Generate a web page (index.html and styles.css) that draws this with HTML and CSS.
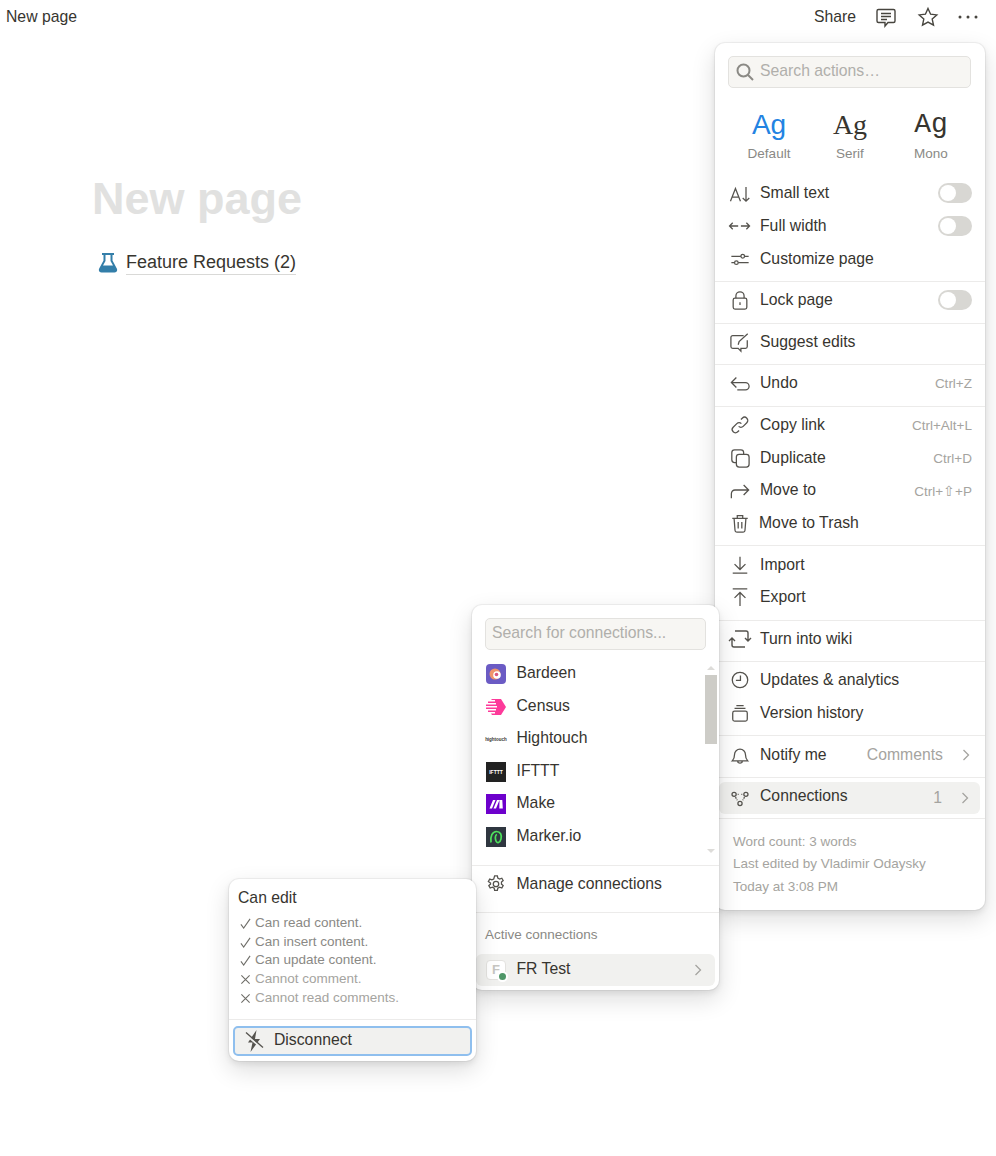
FILE: index.html
```html
<!DOCTYPE html>
<html lang="en">

<head>
    <meta charset="UTF-8">
    <meta name="viewport" content="width=device-width, initial-scale=1.0">
    <title>New page</title>
    <link rel="stylesheet" href="styles.css">
</head>
<body>
    <header class="topbar">
        <span class="crumb">New page</span>
        <div class="topbar-actions">
            <span class="share">Share</span>
            <svg class="top-icon" width="22" height="22" viewBox="0 0 22 22"><path d="M3.500 3.500h15a1.500 1.500 0 0 1 1.500 1.500v10a1.500 1.500 0 0 1-1.500 1.500h-5.500l-3 3.500v-3.500H3.500a1.500 1.500 0 0 1-1.500-1.500v-10a1.500 1.500 0 0 1 1.500-1.500z"/><path d="M6 7.500h10M6 10.500h10M6 13.500h6"/></svg>
            <svg class="top-icon" width="22" height="22" viewBox="0 0 22 22"><path d="M11 2.500l2.600 5.700 6.200.7-4.600 4.200 1.300 6.100-5.500-3.100-5.500 3.100 1.300-6.100-4.600-4.200 6.200-.7z"/></svg>
            <svg class="dots" width="20" height="4" viewBox="0 0 20 4"><circle cx="2" cy="2" r="1.500"/><circle cx="10" cy="2" r="1.500"/><circle cx="18" cy="2" r="1.500"/></svg>
        </div>
    </header>

    <main class="page">
        <h1 class="title">New page</h1>
        <div class="subpage">
            <svg width="20" height="22" viewBox="0 0 20 22"><path fill="#337ea9" d="M4 1h12v2h-1.500v5.500l4.300 8c1 2-.2 4-2.300 4H3.500c-2.100 0-3.300-2-2.300-4l4.300-8V3H4z"/><path fill="#fff" d="M7.500 3h5v6l2.500 4.500H5L7.500 9z"/></svg>
            <a class="subpage-link">Feature Requests (2)</a>
        </div>
    </main>

    <!-- main page menu -->
    <aside class="menu menu-page">
        <div class="menu-top">
            <div class="search search-icon">
                <svg width="20" height="20" viewBox="0 0 20 20"><circle cx="8.500" cy="8.500" r="6"/><path d="M13 13l5 5"/></svg>
                <span>Search actions…</span>
            </div>
            <div class="fonts">
                <div class="font-opt"><span class="ag ag-default">Ag</span><span>Default</span></div>
                <div class="font-opt"><span class="ag ag-serif">Ag</span><span>Serif</span></div>
                <div class="font-opt"><span class="ag ag-mono">Ag</span><span>Mono</span></div>
            </div>
        </div>

        <div class="section section-first">
            <div class="row"><svg class="ic" viewBox="0 0 22 22"><path d="M.5 20L6 6l5.500 14M2.500 15.500h7M17.600 4.500V20M14 16.500l3.600 3.500 3.600-3.500"/></svg><span class="label">Small text</span><i class="toggle"></i></div>
            <div class="row"><svg class="ic" viewBox="0 0 22 22"><path d="M-.5 11H9M3 7.500L-.5 11 3 14.500M12 11h9.500M18 7.500l3.500 3.500-3.500 3.500"/></svg><span class="label">Full width</span><i class="toggle"></i></div>
            <div class="row"><svg class="ic" viewBox="0 0 22 22"><path d="M1.500 8h10.500M16 8h4.500M1.500 15H5M9 15h11.500"/><circle cx="14" cy="8" r="2"/><circle cx="7" cy="15" r="2"/></svg><span class="label">Customize page</span></div>
        </div>
        <div class="section">
            <div class="row"><svg class="ic" viewBox="0 0 22 22"><rect x="3.500" y="9" width="15" height="12" rx="2"/><path d="M6.500 9V6.500a4.500 4.500 0 0 1 9 0V9M11 13.500v3"/></svg><span class="label">Lock page</span><i class="toggle"></i></div>
        </div>
        <div class="section">
            <div class="row"><svg class="ic" viewBox="0 0 22 22"><path d="M15 4H3a2 2 0 0 0-2 2v10a2 2 0 0 0 2 2h6l3 3v-3h5a2 2 0 0 0 2-2V9M9 14l1-3.500L19.500 2"/></svg><span class="label">Suggest edits</span></div>
        </div>
        <div class="section">
            <div class="row"><svg class="ic" viewBox="0 0 22 22"><path d="M7 5L1.500 10.500 7 16M1.500 10.500H17a4 4 0 0 1 0 8H8"/></svg><span class="label">Undo</span><span class="hint">Ctrl+Z</span></div>
        </div>
        <div class="section">
            <div class="row"><svg class="ic" viewBox="0 0 22 22"><path d="M9.500 12.500a3.500 3.500 0 0 0 5 0l4-4a3.500 3.500 0 0 0-5-5l-1.500 1.500M12.500 9.500a3.500 3.500 0 0 0-5 0l-4 4a3.500 3.500 0 0 0 5 5l1.500-1.500"/></svg><span class="label">Copy link</span><span class="hint">Ctrl+Alt+L</span></div>
            <div class="row"><svg class="ic" viewBox="0 0 22 22"><rect x="7" y="7" width="14" height="14" rx="3"/><path d="M7 16H5a3 3 0 0 1-3-3V5a3 3 0 0 1 3-3h7a3 3 0 0 1 3 3v2"/></svg><span class="label">Duplicate</span><span class="hint">Ctrl+D</span></div>
            <div class="row"><svg class="ic" viewBox="0 0 22 22"><path d="M1.500 20v-5a4 4 0 0 1 4-4h15M15 5.500l5.500 5.500-5.500 5.500"/></svg><span class="label">Move to</span><span class="hint">Ctrl+⇧+P</span></div>
            <div class="row"><svg class="ic" viewBox="0 0 22 22"><path d="M2.500 6h17M8 6V3h6v3M4.500 6l1 13a2 2 0 0 0 2 2h7a2 2 0 0 0 2-2l1-13M9 10v7M13 10v7"/></svg><span class="label label-trash">Move to Trash</span></div>
        </div>
        <div class="section">
            <div class="row"><svg class="ic" viewBox="0 0 22 22"><path d="M11 2v14M5 10l6 6 6-6M3 20h16"/></svg><span class="label">Import</span></div>
            <div class="row"><svg class="ic" viewBox="0 0 22 22"><path d="M11 21V6M5 12l6-6 6 6M3 2h16"/></svg><span class="label">Export</span></div>
        </div>
        <div class="section">
            <div class="row"><svg class="ic ic-wide" viewBox="0 0 22 22"><path d="M0 13l3-3 3 3M3 10v7a2 2 0 0 0 2 2h11M22 10l-3 3-3-3M19 13V5a2 2 0 0 0-2-2H6"/></svg><span class="label">Turn into wiki</span></div>
        </div>
        <div class="section">
            <div class="row"><svg class="ic" viewBox="0 0 22 22"><circle cx="11" cy="11" r="8.500"/><path d="M11.500 6v5.500H6.500"/></svg><span class="label">Updates &amp; analytics</span></div>
            <div class="row"><svg class="ic" viewBox="0 0 22 22"><rect x="3" y="9" width="16" height="11" rx="2"/><path d="M5 6h12M7 3h8"/></svg><span class="label">Version history</span></div>
        </div>
        <div class="section">
            <div class="row"><svg class="ic" viewBox="0 0 22 22"><path d="M2.500 17.500c1.500-1.500 2.500-3 2.500-7a6 6 0 0 1 12 0c0 4 1 5.500 2.500 7zM8.500 17.500a2.500 2.500 0 0 0 5 0"/></svg><span class="label">Notify me</span><span class="value">Comments</span><svg class="chev" viewBox="0 0 8 12"><path d="M1.500 1l5 5-5 5"/></svg></div>
        </div>
        <div class="section section-active">
            <div class="row row-hover"><svg class="ic" viewBox="0 0 22 22"><circle cx="4.500" cy="7" r="2.300"/><circle cx="17.500" cy="7" r="2.300"/><circle cx="11" cy="17" r="2.300"/><path d="M8.500 7h1M12.500 7h1M6 10l2 3.500M16 10l-2 3.500" stroke-dasharray="2 1"/></svg><span class="label">Connections</span><span class="value value-count">1</span><svg class="chev" viewBox="0 0 8 12"><path d="M1.500 1l5 5-5 5"/></svg></div>
        </div>
        <div class="section menu-foot">
            <p>Word count: 3 words</p>
            <p>Last edited by Vladimir Odaysky</p>
            <p>Today at 3:08 PM</p>
        </div>
    </aside>

    <!-- connections menu -->
    <aside class="menu menu-conn">
        <div class="search search-conn"><span>Search for connections...</span></div>
        <div class="conn-list">
            <div class="conn-rows">
                <div class="row conn-row">
                    <svg class="logo" viewBox="0 0 20 20"><rect width="20" height="20" rx="4" fill="#6b5bc4"/><circle cx="9" cy="10" r="5.500" fill="#f0956b"/><circle cx="11" cy="11" r="3.800" fill="#fff"/><circle cx="10.500" cy="10.500" r="1.800" fill="#d9577f"/></svg>
                    <span class="label">Bardeen</span>
                </div>
                <div class="row conn-row">
                    <svg class="logo" viewBox="0 0 20 20"><path fill="#fd3a9a" d="M6 2h9l5 8-5 8H6l-1-1.500h4V15H2v-1.500h8V12H0v-1.500h11V9H0V7.500h10V6H2V4.500h7V3H5z"/></svg>
                    <span class="label">Census</span>
                </div>
                <div class="row conn-row">
                    <span class="logo logo-ht">hightouch</span>
                    <span class="label">Hightouch</span>
                </div>
                <div class="row conn-row">
                    <span class="logo logo-ifttt">IFTTT</span>
                    <span class="label">IFTTT</span>
                </div>
                <div class="row conn-row">
                    <svg class="logo" viewBox="0 0 20 20"><rect width="20" height="20" fill="#6d00cc"/><path fill="#fff" d="M3.500 14.500L7 6h2.500L6 14.500zM7.500 14.500L11 6h2.500L10 14.500zM13.500 6h2.800l.5 8.500h-3.500z"/></svg>
                    <span class="label">Make</span>
                </div>
                <div class="row conn-row">
                    <svg class="logo" viewBox="0 0 20 20"><rect width="20" height="20" fill="#2f3640"/><path fill="none" stroke="#4ee05c" stroke-width="1.700" d="M5 15.500C4 9 6.500 4.500 10.500 4.500S16 8 15 12s-4 4.500-5 2-1-6 1-6.500"/></svg>
                    <span class="label">Marker.io</span>
                </div>
            </div>
            <div class="scroll">
                <i class="arrow-up"></i>
                <i class="thumb"></i>
                <i class="arrow-down"></i>
            </div>
        </div>
        <div class="section conn-manage">
            <div class="row conn-row">
                <svg class="ic" viewBox="0 0 22 22"><circle cx="11" cy="11" r="3"/><path d="M9.500 2h3l.5 2.500 2 1 2.400-.9 1.500 2.600-1.900 1.700v2.200l1.900 1.700-1.500 2.600-2.400-.9-2 1-.5 2.500h-3l-.5-2.500-2-1-2.400.9-1.500-2.600 1.900-1.700V9.900L2.600 8.200l1.500-2.600 2.400.9 2-1z"/></svg>
                <span class="label">Manage connections</span>
            </div>
        </div>
        <div class="section conn-active">
            <p class="conn-head">Active connections</p>
            <div class="row row-hover conn-item">
                <span class="avatar">F<i class="dot"></i></span>
                <span class="label">FR Test</span>
                <svg class="chev" viewBox="0 0 8 12"><path d="M1.500 1l5 5-5 5"/></svg>
            </div>
        </div>
    </aside>

    <!-- permissions popup -->
    <aside class="menu menu-perm">
        <div class="perm-body">
            <p class="perm-title">Can edit</p>
            <ul class="perm-list">
                <li><svg viewBox="0 0 12 12"><path d="M1 7l3 4 7-10"/></svg>Can read content.</li>
                <li><svg viewBox="0 0 12 12"><path d="M1 7l3 4 7-10"/></svg>Can insert content.</li>
                <li><svg viewBox="0 0 12 12"><path d="M1 7l3 4 7-10"/></svg>Can update content.</li>
                <li class="off"><svg viewBox="0 0 12 12"><path d="M1.500 1.500l9 9M10.500 1.500l-9 9"/></svg>Cannot comment.</li>
                <li class="off"><svg viewBox="0 0 12 12"><path d="M1.500 1.500l9 9M10.500 1.500l-9 9"/></svg>Cannot read comments.</li>
            </ul>
        </div>
        <div class="perm-foot">
            <button class="disconnect">
                <svg width="20" height="24" viewBox="0 0 20 24"><path fill="#55534e" d="M12.500 1L4 13.500h4.500L6.500 23 16 10h-5z"/><path class="slash-gap" d="M1 5l18 15"/><path class="slash" d="M2 3.500l17 15"/></svg>
                <span class="disconnect-text">Disconnect</span>
            </button>
        </div>
    </aside>
</body>

</html>
```

FILE: styles.css
```css
* {
    box-sizing: border-box;
}

body {
    font-family: "Liberation Sans", Arial, sans-serif;
    color: #37352f;
    background-color: #fff;
    margin: 0;
    padding: 0;
    height: 1156px;
    position: relative;
    overflow: hidden;
}

p {
    margin: 0;
}

.topbar {
    display: flex;
    align-items: center;
    justify-content: space-between;
    height: 32px;
    padding: 2px 18px 0 6px;
    font-size: 15.750px;
}

.topbar-actions {
    display: flex;
    align-items: center;
}

.share {
    margin-right: 19px;
}

.top-icon {
    fill: none;
    stroke: #47453f;
    stroke-width: 1.400;
    margin-right: 20px;
}

.top-icon + .top-icon {
    margin-right: 19px;
}

.dots {
    fill: #47453f;
}

.page {
    padding: 140px 0 0 92px;
}

.title {
    margin: 0;
    font-size: 45px;
    line-height: 54px;
    font-weight: 700;
    color: #e1e1e0;
}

.subpage {
    display: flex;
    align-items: center;
    gap: 8px;
    margin-top: 25px;
    margin-left: 6px;
    font-size: 18px;
}

.subpage-link {
    border-bottom: 1px solid #d9d9d7;
    line-height: 23px;
}

.menu {
    position: absolute;
    background-color: #fff;
    border-radius: 10px;
    box-shadow: 0 0 0 1px rgba(15, 15, 15, 0.05), 0 3px 6px rgba(15, 15, 15, 0.08), 0 9px 24px rgba(15, 15, 15, 0.14);
}

.menu-page {
    left: 715px;
    top: 43px;
    width: 270px;
    height: 867px;
}

.menu-conn {
    left: 472px;
    top: 605px;
    width: 247px;
    height: 385px;
}

.menu-perm {
    left: 229px;
    top: 879px;
    width: 247px;
    height: 182px;
}

.menu-top {
    padding: 13px 14px 0 13px;
}

.search {
    display: flex;
    align-items: center;
    height: 32px;
    padding-bottom: 3px;
    background-color: #f7f6f3;
    border: 1px solid #e3e2df;
    border-radius: 5px;
    font-size: 15.750px;
    color: #b0afab;
}

.search-icon {
    padding-left: 6px;
    gap: 5px;
}

.search-icon svg {
    margin-top: 3px;
    fill: none;
    stroke: #8b8a85;
    stroke-width: 2;
}

.fonts {
    display: grid;
    grid-template-columns: repeat(3, 81px);
    margin: 19px 0 0 .5px;
    font-size: 13.500px;
    color: #8a8985;
    height: 70px;
}

.font-opt {
    display: flex;
    flex-direction: column;
    align-items: center;
    gap: 3px;
}

.ag {
    font-size: 28px;
    line-height: 36px;
    color: #37352f;
}

.ag-default {
    color: #2383e2;
}

.ag-serif {
    font-family: "Liberation Serif", serif;
}

.ag-mono {
    font-family: "Liberation Mono", monospace;
}

.section {
    padding: 2px 0 5.750px;
    border-top: 1px solid #ecebea;
}

.section-first {
    border-top: 0;
    padding-top: 0;
}

.row {
    display: flex;
    align-items: center;
    height: 32.750px;
    padding: 0 13px 0 14.500px;
    font-size: 15.750px;
}

.ic {
    flex: none;
    width: 20px;
    height: 20px;
    margin-right: 10.500px;
    overflow: visible;
    fill: none;
    stroke: #55534e;
    stroke-width: 1.400;
}

.ic-wide {
    width: 22px;
    height: 22px;
    margin: 0 9.500px 0 -1px;
}

.label {
    flex: 1;
}

.label-trash {
    margin-left: -1px;
}

.hint {
    margin-top: 1px;
    font-size: 13.500px;
    color: #a5a4a0;
}

.value {
    color: #a5a4a0;
    margin-right: 19px;
}

.value-count {
    flex: none;
    margin-right: 19px;
}

.chev {
    flex: none;
    width: 8px;
    height: 12px;
    margin-right: 2px;
    fill: none;
    stroke: #a5a4a0;
    stroke-width: 1.300;
}

.toggle {
    position: relative;
    flex: none;
    width: 34px;
    height: 20px;
    border-radius: 10px;
    background-color: #d8d7d3;
}

.toggle::after {
    content: "";
    position: absolute;
    left: 2px;
    top: 2px;
    width: 16px;
    height: 16px;
    border-radius: 50%;
    background-color: #fff;
}

.section-active {
    padding: 4px 5px 4px 4px;
}

.section-active .row {
    height: 32px;
    padding: 0 9px 0 10.500px;
}

.section-active .label {
    margin-top: -3px;
}

.row-hover {
    background-color: #f1f1ef;
    border-radius: 6px;
}

.menu-foot {
    padding: 12px 18px 0;
    font-size: 13.500px;
    line-height: 22.500px;
    color: #a5a4a0;
}

/* connections */
.search-conn {
    margin: 13px 13px 0;
    padding-left: 6px;
}

.conn-list {
    display: flex;
    justify-content: space-between;
    height: 215px;
    padding: 8px 2px 0 0;
}

.conn-rows {
    flex: 1;
}

.conn-row {
    height: 32.500px;
    padding-left: 14px;
}

.conn-rows .label {
    margin-top: -2px;
}

.logo {
    flex: none;
    width: 20px;
    height: 20px;
    margin-right: 10.500px;
}

.logo-ht {
    display: flex;
    align-items: center;
    justify-content: center;
    font-size: 4.500px;
    font-weight: 700;
    color: #37352f;
}

.logo-ifttt {
    display: flex;
    align-items: center;
    justify-content: center;
    background-color: #222;
    color: #fff;
    font-size: 5px;
    font-weight: 700;
}

.scroll {
    display: flex;
    flex-direction: column;
    align-items: center;
    width: 12px;
    height: 200px;
}

.thumb {
    flex: none;
    width: 12px;
    height: 69px;
    margin-top: 5px;
    background-color: #cdccc7;
}

.arrow-up,
.arrow-down {
    flex: none;
    width: 0;
    height: 0;
    border-left: 4px solid transparent;
    border-right: 4px solid transparent;
}

.arrow-up {
    margin-top: 8px;
    border-bottom: 4px solid #dddcd9;
}

.arrow-down {
    margin-top: 105px;
    border-top: 4px solid #dddcd9;
}

.conn-manage {
    padding: 2px 0 11px;
}

.conn-active {
    padding: 12px 4px 0;
}

.conn-head {
    padding-left: 9px;
    font-size: 13.500px;
    line-height: 20px;
    color: #8a8985;
    margin-bottom: 9px;
}

.conn-item {
    height: 32px;
    padding: 0 11px 0 10px;
}

.conn-item .label {
    margin-top: -2px;
}

.avatar {
    position: relative;
    display: flex;
    align-items: center;
    justify-content: center;
    flex: none;
    width: 20px;
    height: 20px;
    margin-right: 10.500px;
    font-size: 13px;
    font-weight: 700;
    color: #c7c6c2;
    background-color: #fff;
    border: 1px solid #e3e2df;
    border-radius: 4px;
}

.dot {
    position: absolute;
    right: -3px;
    bottom: -3px;
    width: 11px;
    height: 11px;
    border-radius: 50%;
    background-color: #4f9768;
    border: 2px solid #fff;
}

/* permissions */
.perm-body {
    padding: 10px 9px 0;
    height: 140px;
}

.perm-title {
    font-size: 15.750px;
    line-height: 18px;
}

.perm-list {
    list-style: none;
    margin: 6px 0 0;
    padding: 0;
    font-size: 13.500px;
    color: #8a8985;
}

.perm-list li {
    display: flex;
    align-items: center;
    gap: 4px;
    height: 18.700px;
    padding-left: 2px;
}

.perm-list svg {
    flex: none;
    width: 11px;
    height: 11px;
    fill: none;
    stroke: #6f6e69;
    stroke-width: 1.200;
    margin-top: 2px;
}

.perm-list .off {
    color: #a5a4a0;
}

.perm-foot {
    padding: 6px 4px 0;
    border-top: 1px solid #ecebea;
}

.disconnect {
    display: flex;
    align-items: center;
    gap: 10px;
    width: 100%;
    height: 30px;
    padding: 0 0 0 9px;
    font: inherit;
    font-size: 15.750px;
    color: #37352f;
    background-color: #f1f1ef;
    border: 2px solid #8fbfee;
    border-radius: 5px;
}

.disconnect-text {
    margin-top: -3px;
}

.slash-gap {
    fill: none;
    stroke: #f1f1ef;
    stroke-width: 2;
}

.slash {
    fill: none;
    stroke: #55534e;
    stroke-width: 1.300;
}
```
